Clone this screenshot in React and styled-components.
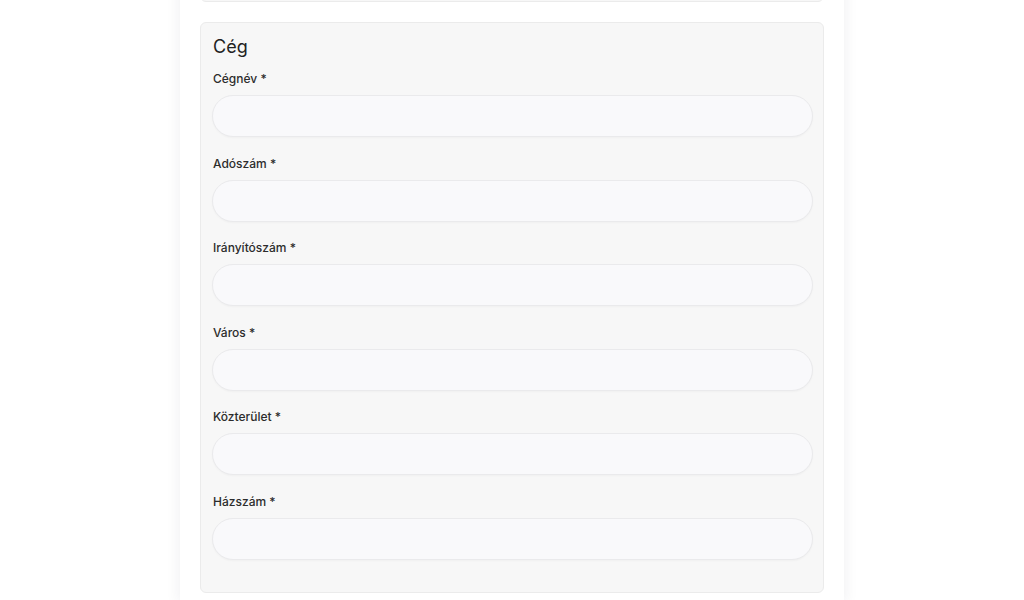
import React from 'react'
import styled, { createGlobalStyle } from 'styled-components'

const GlobalStyle = createGlobalStyle`
  html, body {
    margin: 0;
    padding: 0;
    background: #ffffff;
    font-family: Inter, "Noto Sans", "Liberation Sans", sans-serif;
    overflow: hidden;
  }
`

const Page = styled.div`
  display: flex;
  justify-content: center;
  height: 600px;
  overflow: hidden;
`

const Card = styled.div`
  width: 664px;
  margin-top: -78px;
  background: #ffffff;
  box-shadow: 0 0 12px 3px rgba(20, 20, 60, 0.05);
  padding: 0 20px;
  box-sizing: border-box;
  display: flex;
  flex-direction: column;
  gap: 20px;
`

const Section = styled.section`
  background: #f7f7f7;
  border: 1px solid #ebebeb;
  border-radius: 6px;
  padding: 12px 12px 13px 11px;
  box-sizing: border-box;
  flex-shrink: 0;
  height: ${p => p.$height || 'auto'};
`

const Title = styled.h2`
  margin: 0 0 12px 1px;
  font-size: 18px;
  line-height: 24px;
  font-weight: 400;
  color: #222;
`

const Field = styled.div`
  display: flex;
  flex-direction: column;
  margin-bottom: 18.6px;
`

const Label = styled.label`
  font-size: 12px;
  line-height: 16px;
  font-weight: 500;
  color: #2c2c2c;
  margin: 0 0 8px 1px;
`

const Input = styled.input`
  height: 42px;
  width: 601px;
  box-sizing: border-box;
  border: 1px solid #eaeaec;
  border-radius: 21px;
  background: #f9f9fb;
  box-shadow: 0 1px 2px rgba(0, 0, 0, 0.03);
  padding: 0 16px;
  font-family: inherit;
  font-size: 14px;
  outline: none;
`

const fields = ['Cégnév', 'Adószám', 'Irányítószám', 'Város', 'Közterület', 'Házszám']

const App = () => {
  return (
    <>
      <GlobalStyle />
      <Page>
        <Card>
          <Section $height="80px" />
          <Section>
            <Title>Cég</Title>
            {fields.map(f => (
              <Field key={f}>
                <Label>{f} *</Label>
                <Input type="text" />
              </Field>
            ))}
          </Section>
        </Card>
      </Page>
    </>
  )
}

export default App
